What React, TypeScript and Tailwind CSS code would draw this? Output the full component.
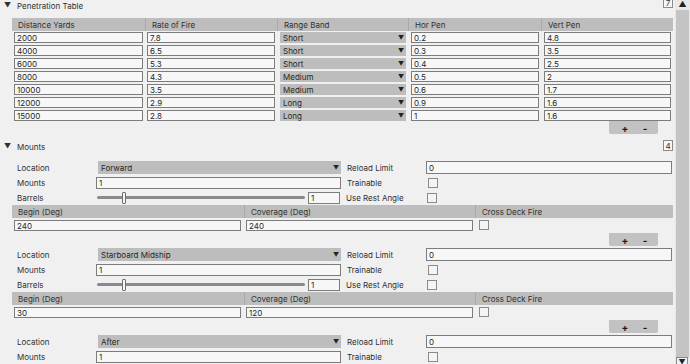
import React from 'react'

type PenRow = [string, string, string, string, string]

const penRows: PenRow[] = [
  ['2000', '7.8', 'Short', '0.2', '4.8'],
  ['4000', '6.5', 'Short', '0.3', '3.5'],
  ['6000', '5.3', 'Short', '0.4', '2.5'],
  ['8000', '4.3', 'Medium', '0.5', '2'],
  ['10000', '3.5', 'Medium', '0.6', '1.7'],
  ['12000', '2.9', 'Long', '0.9', '1.6'],
  ['15000', '2.8', 'Long', '1', '1.6'],
]

function Field({ value, className = '' }: { value: string; className?: string }) {
  return (
    <div
      className={`flex items-center overflow-hidden border border-[#7c7c7c] bg-[#f7f7f7] px-[2px] text-[8px] leading-none text-[#262626] ${className}`}
    >
      {value}
    </div>
  )
}

function Dropdown({ value, className = '' }: { value: string; className?: string }) {
  return (
    <div
      className={`flex items-center justify-between bg-[#bdbdbd] pl-[3px] pr-[2px] text-[8px] leading-none text-[#262626] ${className}`}
    >
      <span>{value}</span>
      <span className="text-[6px] text-[#222]">▼</span>
    </div>
  )
}

function Check() {
  return <div className="h-[10px] w-[10px] border border-[#8a8a8a] bg-[#f4f4f4]" />
}

function HeadCell({ label, first }: { label: string; first?: boolean }) {
  return (
    <div
      className={`flex h-[13px] items-center pl-[6px] text-[8px] text-[#303030] ${first ? '' : 'border-l border-[#a9a9a9]'}`}
    >
      {label}
    </div>
  )
}

function AddRemove() {
  return (
    <div className="ml-[609px] flex h-[13px] w-[49px] items-center rounded-b-[2px] bg-[#c2c2c2] pl-[6px] text-[10px] font-bold leading-none text-[#1c1c1c]">
      <span className="w-[20px] text-center">+</span>
      <span className="w-[20px] text-center">-</span>
    </div>
  )
}

function SizeBox({ value, className = '' }: { value: string; className?: string }) {
  return (
    <div
      className={`ml-auto mr-[2px] flex h-[11px] w-[10px] items-center justify-center border border-[#8a8a8a] bg-[#f7f7f7] text-[8px] leading-none ${className}`}
    >
      {value}
    </div>
  )
}

function Label({ text }: { text: string }) {
  return <div className="w-[79px] shrink-0 text-[8px] text-[#303030]">{text}</div>
}

function Mount({ location, begin, coverage, partial }: { location: string; begin: string; coverage: string; partial?: boolean }) {
  return (
    <div className="flex flex-col">
      <div className="flex h-[15px] items-center pl-[17px]">
        <Label text="Location" />
        <Dropdown value={location} className="ml-[2px] h-[13px] w-[243px]" />
        <div className="ml-[6px] flex items-center">
          <Label text="Reload Limit" />
          <Field value="0" className="h-[13px] w-[246px]" />
        </div>
      </div>
      <div className="flex h-[15px] items-center pl-[17px]">
        <Label text="Mounts" />
        <Field value="1" className="h-[12px] w-[245px]" />
        <div className="ml-[6px] flex items-center">
          <Label text="Trainable" />
          <div className="ml-[2px]">
            <Check />
          </div>
        </div>
      </div>
      {!partial && (
        <>
          <div className="flex h-[15px] items-center pl-[17px]">
            <Label text="Barrels" />
            <div className="relative flex h-[12px] w-[209px] items-center pl-[1px]">
              <div className="h-[3px] w-full rounded-full bg-[#8a8a8a]" />
              <div className="absolute left-[26px] top-0 h-[12px] w-[4px] rounded-[1px] border border-[#6f6f6f] bg-[#f7f7f7]" />
            </div>
            <Field value="1" className="ml-[3px] h-[12px] w-[32px]" />
            <div className="ml-[6px] flex items-center">
              <Label text="Use Rest Angle" />
              <div className="ml-[2px]">
                <Check />
              </div>
            </div>
          </div>
          <div className="ml-[12px] grid w-[661px] grid-cols-[232px_231px_198px] bg-[#bdbdbd]">
            <HeadCell label="Begin (Deg)" first />
            <HeadCell label="Coverage (Deg)" />
            <HeadCell label="Cross Deck Fire" />
          </div>
          <div className="ml-[12px] mt-[2px] grid h-[11px] w-[661px] grid-cols-[232px_231px_198px]">
            <Field value={begin} className="ml-[2px] mr-[3px] h-[11px]" />
            <Field value={coverage} className="ml-[2px] mr-[2px] h-[11px]" />
            <div className="pl-[4px]">
              <Check />
            </div>
          </div>
          <div className="mt-[2px]">
            <AddRemove />
          </div>
        </>
      )}
    </div>
  )
}

function Scrollbar() {
  return (
    <div className="flex h-full w-[15px] flex-col bg-[#e8e8e8]">
      <div className="flex h-[10px] items-start justify-center text-[8px] leading-none text-[#222]">▲</div>
      <div className="mx-[1px] flex-1 bg-[#c4c4c4]" />
      <div className="-mb-[4px] ml-[1px] flex h-[11px] w-[12px] items-start justify-center border border-[#8a8a8a] bg-[#f2f2f2] pt-[1px] text-[7px] leading-none text-[#222]">
        ▼
      </div>
    </div>
  )
}

export default function App() {
  return (
    <div className="flex h-[364px] w-[690px] overflow-hidden bg-[#f0f0f0] text-[#303030] [font-family:Inter,sans-serif]">
      <div className="-mt-[3px] w-[675px] shrink-0">
        <div className="flex h-[18px] items-center">
          <span className="w-[17px] pl-[4px] text-[7px]">▼</span>
          <span className="text-[8px]">Penetration Table</span>
          <SizeBox value="7" className="self-start" />
        </div>

        <div className="ml-[12px] mt-[3px] w-[661px]">
          <div className="grid grid-cols-[133px_132px_131px_133px_132px] bg-[#bdbdbd]">
            <HeadCell label="Distance Yards" first />
            <HeadCell label="Rate of Fire" />
            <HeadCell label="Range Band" />
            <HeadCell label="Hor Pen" />
            <HeadCell label="Vert Pen" />
          </div>
          <div className="mt-[1px] flex flex-col gap-[2px]">
            {penRows.map((r) => (
              <div key={r[0]} className="grid h-[11px] grid-cols-[133px_132px_131px_133px_132px]">
                <Field value={r[0]} className="mx-[2px] h-[11px]" />
                <Field value={r[1]} className="mx-[2px] h-[11px]" />
                <Dropdown value={r[2]} className="ml-[3px] mr-[2px] h-[11px]" />
                <Field value={r[3]} className="ml-[3px] mr-[2px] h-[11px]" />
                <Field value={r[4]} className="ml-[3px] mr-[2px] h-[11px]" />
              </div>
            ))}
          </div>
        </div>
        <AddRemove />

        <div className="mt-[6px] flex h-[14px] items-center">
          <span className="w-[17px] pl-[4px] text-[7px]">▼</span>
          <span className="text-[8px]">Mounts</span>
          <SizeBox value="4" className="self-start" />
        </div>

        <div className="mt-[6px] flex flex-col gap-[1px]">
          <Mount location="Forward" begin="240" coverage="240" />
          <Mount location="Starboard Midship" begin="30" coverage="120" />
          <Mount location="After" begin="" coverage="" partial />
        </div>
      </div>
      <Scrollbar />
    </div>
  )
}
